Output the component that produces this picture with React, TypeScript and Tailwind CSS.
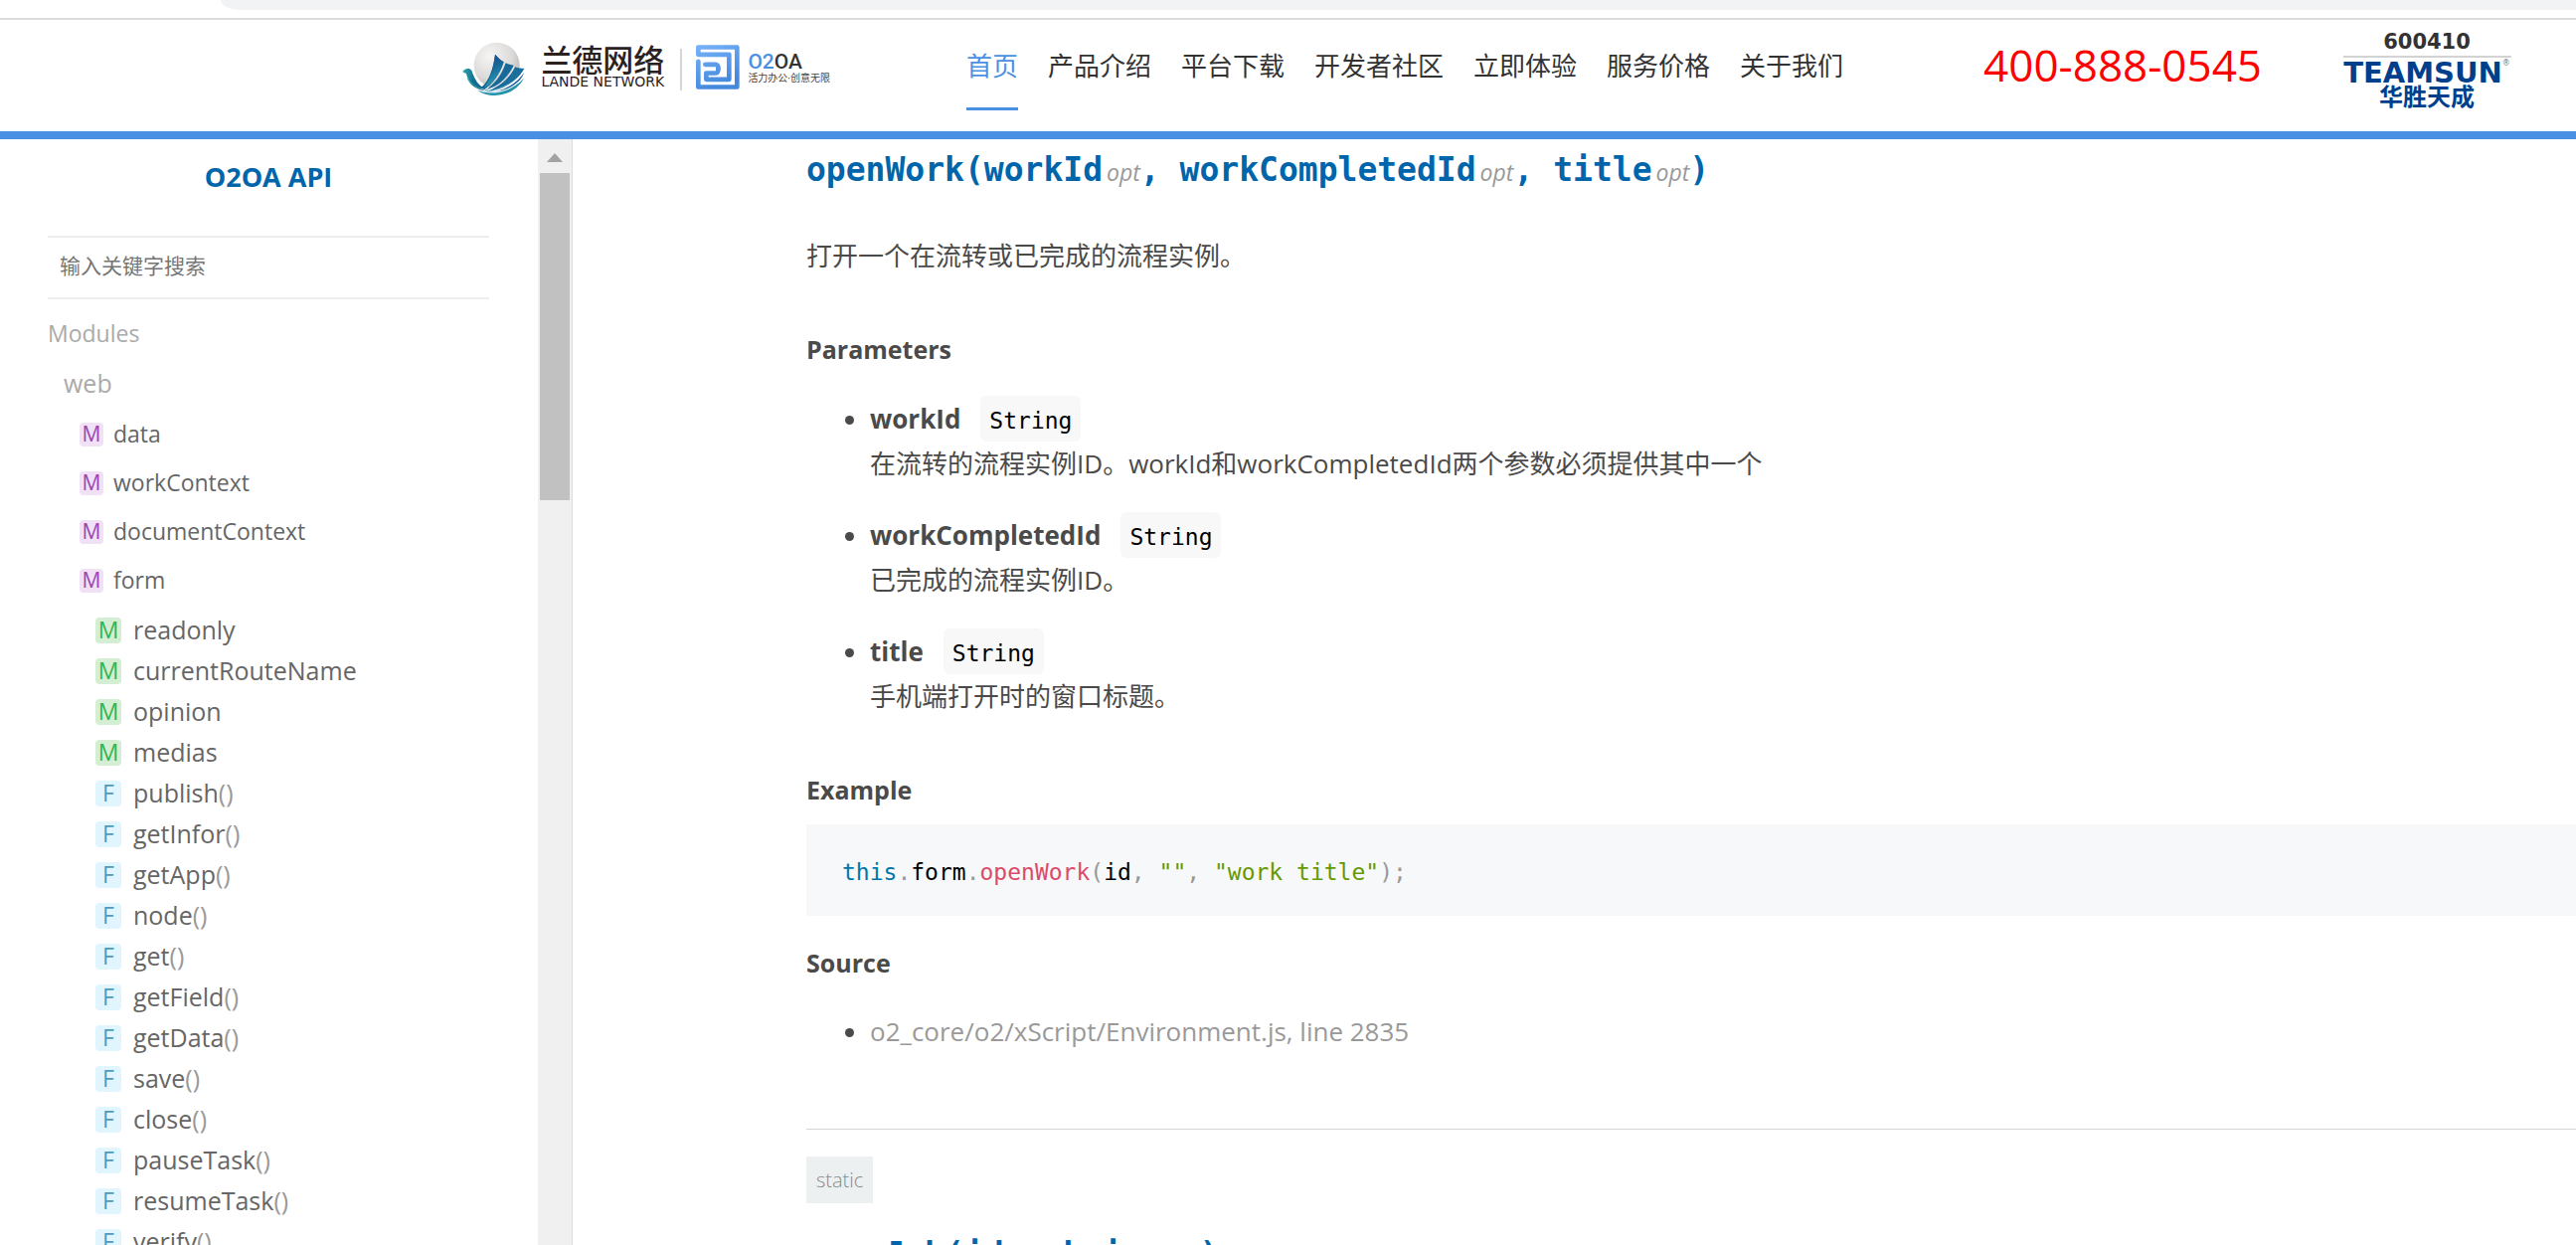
const navItems = [
  "首页",
  "产品介绍",
  "平台下载",
  "开发者社区",
  "立即体验",
  "服务价格",
  "关于我们",
];

const modules = ["data", "workContext", "documentContext", "form"];

const members = ["readonly", "currentRouteName", "opinion", "medias"];

const functions = [
  "publish",
  "getInfor",
  "getApp",
  "node",
  "get",
  "getField",
  "getData",
  "save",
  "close",
  "pauseTask",
  "resumeTask",
  "verify",
];

const parameters = [
  {
    name: "workId",
    type: "String",
    description: "在流转的流程实例ID。workId和workCompletedId两个参数必须提供其中一个",
  },
  {
    name: "workCompletedId",
    type: "String",
    description: "已完成的流程实例ID。",
  },
  { name: "title", type: "String", description: "手机端打开时的窗口标题。" },
];

const LandeIcon = () => (
  <svg width="75" height="62" viewBox="0 0 225 186" className="-ml-1.5">
    <defs>
      <radialGradient id="ball" cx="0.35" cy="0.3" r="0.8">
        <stop offset="0" stopColor="#f6f5f4" />
        <stop offset="0.6" stopColor="#dddbd9" />
        <stop offset="1" stopColor="#b5b2b0" />
      </radialGradient>
      <linearGradient id="wing" x1="0" y1="0" x2="0.3" y2="1">
        <stop offset="0" stopColor="#1d3f86" />
        <stop offset="0.5" stopColor="#17699a" />
        <stop offset="1" stopColor="#2aa0b0" />
      </linearGradient>
      <linearGradient id="body" x1="0" y1="0" x2="1" y2="0.2">
        <stop offset="0" stopColor="#36b3b0" />
        <stop offset="0.4" stopColor="#12708f" />
        <stop offset="1" stopColor="#145a94" />
      </linearGradient>
    </defs>
    <circle cx="119" cy="83" r="69" fill="url(#ball)" />
    <path
      d="M16 103C20 92 36 89 43 98C50 118 58 136 74 148C95 130 108 95 114 50C122 60 132 68 140 73C128 110 108 138 82 156C50 150 32 130 27 108Z"
      fill="url(#body)"
    />
    <path
      d="M114 50C122 60 132 68 140 73C128 110 108 138 80 152C98 128 109 96 114 50Z"
      fill="url(#wing)"
    />
    <path
      d="M146 76C154 80 162 82 170 83C152 120 122 148 82 160C114 140 134 112 146 76Z"
      fill="#17699a"
    />
    <path
      d="M174 88C184 92 192 93 202 93C180 132 138 160 84 164C126 150 154 124 174 88Z"
      fill="#1b6f9e"
    />
    <path
      d="M202 104C186 146 132 172 74 158C50 152 34 138 28 118C46 144 70 158 100 163C144 160 178 138 202 104Z"
      fill="url(#body)"
    />
    <path
      d="M201 122C182 158 142 178 98 173C84 171 72 166 60 158C112 174 164 160 201 122Z"
      fill="#2593ab"
    />
    <path
      d="M88 156C126 148 158 122 172 87M92 163C136 156 176 134 202 99M72 160C120 175 170 157 202 114"
      fill="none"
      stroke="#fff"
      strokeWidth="2"
    />
  </svg>
);

const O2Icon = () => (
  <svg width="44" height="45" viewBox="0 0 132 134">
    <defs>
      <linearGradient id="o2" x1="0" y1="0" x2="0.4" y2="1">
        <stop offset="0" stopColor="#74b0f8" />
        <stop offset="1" stopColor="#4489dc" />
      </linearGradient>
    </defs>
    <path
      d="M7 50V127H124V7H7V29H100V104H31V85H60C70 85 70 59 60 59H28"
      fill="none"
      stroke="url(#o2)"
      strokeWidth="14"
      strokeLinejoin="round"
      strokeLinecap="round"
    />
  </svg>
);

const Header = () => (
  <header className="flex h-[122px] shrink-0 items-start justify-between border-t-2 border-b-8 border-t-[#dcdcdc] border-b-[#4a90e2] pr-[62px] pl-[18%]">
    <div className="flex">
      <a href="#" className="flex items-start pt-[18px]">
        <LandeIcon />
        <span className="ml-[9px] flex w-[134px] flex-col pt-2 text-[#2b211e]">
          <span className="text-[31px] leading-7 font-medium">兰德网络</span>
          <span className="font-['DejaVu_Sans'] text-[14px] leading-4 whitespace-nowrap">
            LANDE NETWORK
          </span>
        </span>
        <span className="mt-[11px] ml-1.5 h-[42px] w-0.5 bg-[#d5d5d5]" />
        <span className="mt-[7px] ml-3.5">
          <O2Icon />
        </span>
        <span className="ml-2 flex flex-col pt-3.5 whitespace-nowrap">
          <span className="font-['Roboto'] text-[21px] leading-5 font-medium text-[#333]">
            <span className="text-[#4a90e2]">O2</span>OA
          </span>
          <span className="text-[10px] leading-3 text-[#444]">
            活力办公·创意无限
          </span>
        </span>
      </a>
      <nav className="ml-[137px] flex gap-[30px] pt-[26px] text-[26px] leading-10 text-[#333]">
        {navItems.map((item, index) => (
          <a
            key={item}
            href="#"
            className={
              index === 0
                ? "h-[65px] border-b-[3px] border-[#4a90e2] text-[#4a90e2]"
                : "h-[65px]"
            }
          >
            {item}
          </a>
        ))}
      </nav>
    </div>
    <div className="flex">
      <a
        href="tel:400-888-0545"
        className="pt-[15px] text-[44px] leading-[60px] text-[#f00]"
      >
        400-888-0545
      </a>
      <a
        href="#"
        className="ml-[78px] flex w-[176px] flex-col items-center pt-2 font-['DejaVu_Sans','Noto_Sans_CJK_SC',sans-serif] font-bold text-[#003f8c]"
      >
        <span className="text-[21px] leading-7 text-[#333]">600410</span>
        <span className="h-0.5 w-[169px] bg-[#d3d3d3]" />
        <span className="flex text-[29px] leading-[30px]">
          TEAMSUN
          <span className="text-[8px] leading-3 font-normal text-[#777]">®</span>
        </span>
        <span className="text-[24px] leading-5">华胜天成</span>
      </a>
    </div>
  </header>
);

const ModuleBadge = () => (
  <span className="flex size-6 items-center justify-center rounded bg-[#f0e1f6] text-[21px] text-[#9b45b5]">
    M
  </span>
);

const MemberBadge = () => (
  <span className="flex size-[26px] items-center justify-center rounded bg-[#d4eed4] text-[23px] text-[#37b34a]">
    M
  </span>
);

const FunctionBadge = () => (
  <span className="flex size-[26px] items-center justify-center rounded bg-[#e1f5fe] text-[23px] text-[#4f9abc]">
    F
  </span>
);

const Sidebar = () => (
  <aside className="flex w-[576px] shrink-0 overflow-hidden border-r border-[#ddd]">
    <div className="flex-1 pr-[49px] pl-12">
      <h1 className="pt-[18px] text-center text-[27px] leading-10 font-bold text-[#0065ab]">
        <a href="#">O2OA API</a>
      </h1>
      <div className="mt-[39px] border-y-2 border-[#eee]">
        <input
          type="text"
          aria-label="输入关键字搜索"
          placeholder="输入关键字搜索"
          className="block h-[60px] w-full px-3 pb-1 text-[21px] outline-none placeholder:text-[#757575]"
        />
      </div>
      <h2 className="mt-[9px] text-[23px] leading-[50px] text-[#aaa]">
        Modules
      </h2>
      <h3 className="pl-4 text-[25px] leading-[50px] text-[#aaa]">web</h3>
      <ul className="mt-0.5 pl-8 text-[23px] text-[#666]">
        {modules.map((name) => (
          <li key={name}>
            <a href="#" className="flex h-[49px] items-center gap-2.5">
              <ModuleBadge />
              {name}
            </a>
          </li>
        ))}
      </ul>
      <ul className="mt-[5px] pl-12 text-[25px] text-[#666]">
        {members.map((name) => (
          <li key={name}>
            <a href="#" className="flex h-[41px] items-center gap-3">
              <MemberBadge />
              {name}
            </a>
          </li>
        ))}
        {functions.map((name) => (
          <li key={name}>
            <a href="#" className="flex h-[41px] items-center gap-3">
              <FunctionBadge />
              <span>
                {name}
                <span className="text-[#999]">()</span>
              </span>
            </a>
          </li>
        ))}
      </ul>
    </div>
    <div className="flex w-[34px] flex-col items-center bg-[#f0f0f0] pt-3.5">
      <svg width="16" height="9" viewBox="0 0 16 9">
        <path d="M8 0L16 9H0Z" fill="#a3a3a3" />
      </svg>
      <div className="mt-[11px] h-[329px] w-[30px] bg-[#c1c1c1]" />
    </div>
  </aside>
);

const Optional = () => (
  <span className="ml-1 font-['Open_Sans'] text-[23px] leading-none font-normal text-[#999] italic">
    opt
  </span>
);

const SectionTitle = ({ children }: { children: string }) => (
  <h5 className="text-[25px] leading-10 font-bold">{children}</h5>
);

const signature =
  "font-['DejaVu_Sans_Mono'] text-[33px] leading-[48px] font-bold whitespace-nowrap text-[#0065ab]";

const Content = () => (
  <main className="min-w-0 flex-1 overflow-hidden pt-[7px] pl-[235px] text-[26px] text-[#4a4a4a]">
    <h4 className={signature}>
      openWork(workId
      <Optional />, workCompletedId
      <Optional />, title
      <Optional />)
    </h4>
    <p className="mt-[42px] mb-[54px] leading-10">
      打开一个在流转或已完成的流程实例。
    </p>
    <SectionTitle>Parameters</SectionTitle>
    <ul className="mt-[27px] flex list-disc flex-col gap-[27px] pl-16">
      {parameters.map((param) => (
        <li key={param.name} className="leading-[46px]">
          <b>{param.name}</b>
          <code className="ml-5 inline-block rounded-md bg-[#f8f8f8] px-[9px] pt-1 align-top font-['DejaVu_Sans_Mono'] text-[23px] leading-[42px] text-black">
            {param.type}
          </code>
          <p className="leading-[44px]">{param.description}</p>
        </li>
      ))}
    </ul>
    <div className="mt-[52px]">
      <SectionTitle>Example</SectionTitle>
    </div>
    <pre className="mt-[15px] mb-[27px] bg-[#f6f8fa] px-9 pt-1 font-['DejaVu_Sans_Mono'] text-[23px] leading-[88px] text-black">
      <span className="text-[#0077aa]">this</span>
      <span className="text-[#999]">.</span>form
      <span className="text-[#999]">.</span>
      <span className="text-[#dd4a68]">openWork</span>
      <span className="text-[#999]">(</span>id
      <span className="text-[#999]">,</span>{" "}
      <span className="text-[#669900]">""</span>
      <span className="text-[#999]">,</span>{" "}
      <span className="text-[#669900]">"work title"</span>
      <span className="text-[#999]">);</span>
    </pre>
    <SectionTitle>Source</SectionTitle>
    <ul className="mt-[29px] list-disc pl-16 leading-10">
      <li>
        <a href="#" className="text-[#999]">
          o2_core/o2/xScript/Environment.js, line 2835
        </a>
      </li>
    </ul>
    <hr className="mt-[78px] mb-[27px] border-t border-[#d5d5d5]" />
    <span className="block w-fit bg-[#ecf0f1] px-2.5 text-[20px] leading-[47px] font-light text-[#7f8c8d]">
      static
    </span>
    <h4 className={`mt-7 ${signature}`}>
      openJob(id, choice
      <Optional />)
    </h4>
  </main>
);

export default function App() {
  return (
    <div className="flex h-screen flex-col overflow-hidden bg-white font-['Open_Sans','Noto_Sans_CJK_SC',sans-serif]">
      <div className="h-[18px] shrink-0 pl-[222px]">
        <div className="h-2.5 rounded-bl-[20px_10px] bg-[#f1f3f4]" />
      </div>
      <Header />
      <div className="flex min-h-0 flex-1">
        <Sidebar />
        <Content />
      </div>
    </div>
  );
}
